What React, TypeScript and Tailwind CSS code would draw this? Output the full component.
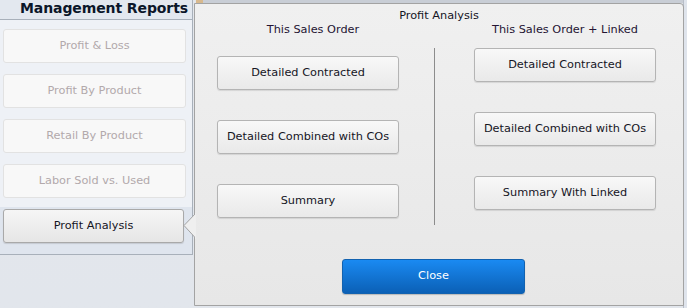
import React from "react";

const font = { fontFamily: '"DejaVu Sans", Verdana, sans-serif' };

function SideBtn({ label, active }: { label: string; active?: boolean }) {
  return (
    <div
      className={
        active
          ? "h-[34px] w-[181px] flex items-center justify-center rounded-[3px] border border-[#a9a9a9] bg-gradient-to-b from-[#f6f6f6] to-[#e6e6e6] text-[#15151f] text-[11.3px] shadow-[0_1px_1px_rgba(0,0,0,0.12)]"
          : "h-[34px] w-[183px] flex items-center justify-center rounded-[3px] border border-[#e2e2e2] bg-[#f8f8f8] text-[#b2a9ab] text-[11.3px]"
      }
    >
      {label}
    </div>
  );
}

function Btn({ label }: { label: string }) {
  return (
    <div className="h-[34px] w-[182px] flex items-center justify-center rounded-[3px] border border-[#b4b4b4] bg-gradient-to-b from-[#f8f8f8] to-[#e9e9e9] text-[#15151f] text-[11.3px] shadow-[0_1px_1px_rgba(0,0,0,0.1)]">
      {label}
    </div>
  );
}

export default function App() {
  return (
    <div
      className="relative w-[687px] h-[308px] overflow-hidden bg-gradient-to-b from-[#e4e7ec] to-[#e2e6ec]"
      style={font}
    >
      {/* left panel */}
      <div className="flex flex-col w-[193px]">
        <div className="h-[20px] bg-[#e3e8ef] border-b border-[#a8b0ba] border-r border-r-[#a8b0ba] flex items-start justify-end pr-[4px] overflow-hidden">
          <span className="text-[14px] font-bold text-[#0b1629] leading-[17px] tracking-[-0.1px]">
            Management Reports
          </span>
        </div>
        <div className="h-[235px] bg-[#eef1f6] border-r border-[#a8b0ba] border-b border-b-[#a8b0ba] flex flex-col">
          <div className="flex flex-col gap-[11px] pl-[3px] pt-[9px]">
            <SideBtn label="Profit & Loss" />
            <SideBtn label="Profit By Product" />
            <SideBtn label="Retail By Product" />
            <SideBtn label="Labor Sold vs. Used" />
          </div>
          <div className="mt-[9px] flex-1 bg-[#dfe5ee] pl-[3px] pt-[2px]">
            <SideBtn label="Profit Analysis" active />
          </div>
        </div>
        <div className="flex-1 bg-gradient-to-b from-[#dcdcdc] to-[#e1e5eb]" />
      </div>

      {/* background bits above popover */}
      <div className="absolute left-[196px] top-0 w-[7px] h-[3px] bg-[#d8b98e]" />
      <div className="absolute left-[203px] top-0 w-[484px] h-[3px] bg-[#c9ced6]" />
      <div className="absolute right-0 top-0 w-[4px] h-[308px] bg-[#dfe4ec] border-l border-[#b8bec8]" />

      {/* popover */}
      <div className="absolute left-[194px] top-[3px] w-[490px] h-[303px] rounded-tr-[4px] border border-[#a3a3a3] bg-gradient-to-b from-[#f0f0f0] to-[#e7e7e7] flex flex-col">
        <div className="pt-[5px] text-center text-[11.3px] leading-[14px] text-[#15151f]">
          Profit Analysis
        </div>
        <div className="flex pl-[22px]">
          <div className="flex flex-col w-[182px]">
            <div className="text-center text-[11.3px] leading-[14px] text-[#241433] pl-[10px]">
              This Sales Order
            </div>
            <div className="flex flex-col gap-[30px] pt-[19px]">
              <Btn label="Detailed Contracted" />
              <Btn label="Detailed Combined with COs" />
              <Btn label="Summary" />
            </div>
          </div>
          <div className="ml-[35px] mt-[25px] w-[1px] h-[177px] bg-[#8c8c8c]" />
          <div className="ml-[39px] flex flex-col w-[182px]">
            <div className="text-center text-[11.3px] leading-[14px] text-[#241433]">
              This Sales Order + Linked
            </div>
            <div className="flex flex-col gap-[30px] pt-[11px]">
              <Btn label="Detailed Contracted" />
              <Btn label="Detailed Combined with COs" />
              <Btn label="Summary With Linked" />
            </div>
          </div>
        </div>
        <div className="mt-[34px] ml-[147px] h-[35px] w-[183px] flex items-center justify-center rounded-[3px] border border-[#1262b0] bg-gradient-to-b from-[#1a8af2] to-[#0b60b6] text-white text-[11.3px] shadow-[0_1px_1px_rgba(0,0,0,0.2)]">
          Close
        </div>
      </div>

      {/* arrow */}
      <svg className="absolute left-[183px] top-[213px]" width="13" height="26" viewBox="0 0 13 26">
        <path d="M12.5 0.5 L1 12.5 L12.5 25" fill="#efefef" stroke="#a3a3a3" strokeWidth="1" />
        <rect x="12" y="0" width="2" height="26" fill="#efefef" />
      </svg>
    </div>
  );
}
